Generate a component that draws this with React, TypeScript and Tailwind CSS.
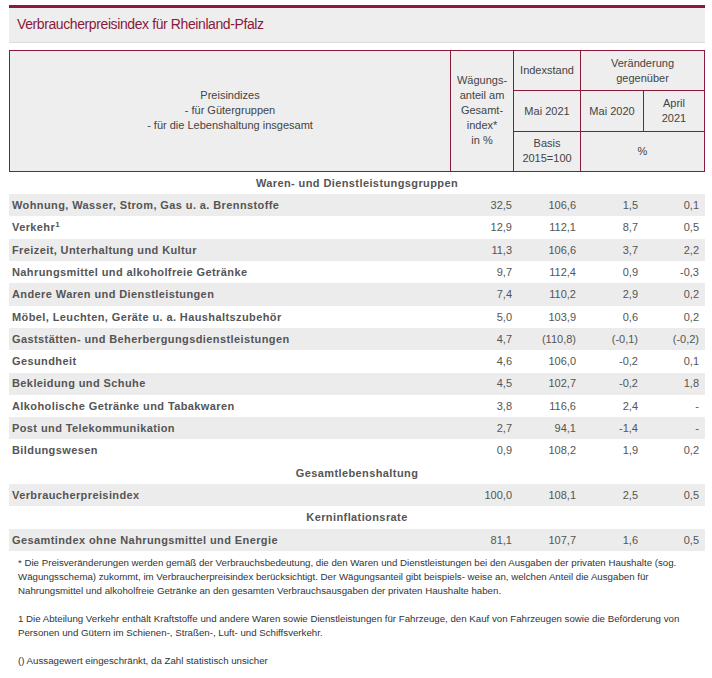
const rows: [string, string, string, string, string, boolean?][] = [
  ["Wohnung, Wasser, Strom, Gas u. a. Brennstoffe", "32,5", "106,6", "1,5", "0,1"],
  ["Verkehr", "12,9", "112,1", "8,7", "0,5", true],
  ["Freizeit, Unterhaltung und Kultur", "11,3", "106,6", "3,7", "2,2"],
  ["Nahrungsmittel und alkoholfreie Getränke", "9,7", "112,4", "0,9", "-0,3"],
  ["Andere Waren und Dienstleistungen", "7,4", "110,2", "2,9", "0,2"],
  ["Möbel, Leuchten, Geräte u. a. Haushaltszubehör", "5,0", "103,9", "0,6", "0,2"],
  ["Gaststätten- und Beherbergungsdienstleistungen", "4,7", "(110,8)", "(-0,1)", "(-0,2)"],
  ["Gesundheit", "4,6", "106,0", "-0,2", "0,1"],
  ["Bekleidung und Schuhe", "4,5", "102,7", "-0,2", "1,8"],
  ["Alkoholische Getränke und Tabakwaren", "3,8", "116,6", "2,4", "-"],
  ["Post und Telekommunikation", "2,7", "94,1", "-1,4", "-"],
  ["Bildungswesen", "0,9", "108,2", "1,9", "0,2"],
];

function DataRow({ r, gray }: { r: [string, string, string, string, string, boolean?]; gray: boolean }) {
  return (
    <div className={`flex h-[22.3px] items-center ${gray ? "bg-[#ececec]" : ""}`}>
      <div className="flex-1 pl-[3px] font-bold tracking-[0.4px] text-[#555]">
        {r[0]}
        {r[5] && <sup className="text-[8px]">1</sup>}
      </div>
      <div className="w-[60px] pr-[2px] text-right">{r[1]}</div>
      <div className="w-[67px] pr-[5px] text-right">{r[2]}</div>
      <div className="w-[63px] pr-[6px] text-right">{r[3]}</div>
      <div className="w-[61px] pr-[6px] text-right">{r[4]}</div>
    </div>
  );
}

function Section({ title }: { title: string }) {
  return (
    <div className="flex h-[22.3px] items-center justify-center font-bold tracking-[0.4px] text-[#555]">
      {title}
    </div>
  );
}

export default function App() {
  return (
    <main
      className="min-h-[678px] bg-white pt-[5px] text-[11px] text-[#555]"
      style={{ fontFamily: '"Liberation Sans", Arial, sans-serif' }}
    >
      <div className="mx-[9px] w-[696px]">

        <div className="border-t-[3px] border-b border-t-[#8a1a3a] border-b-[#dcdcdc] bg-[#eeeeee] px-[8px] pb-[9px] pt-[8px]">
          <h1 className="text-[14px] leading-[17px] tracking-[-0.4px] text-[#8a1a3a]">
            Verbraucherpreisindex für Rheinland-Pfalz
          </h1>
        </div>

        <table className="mt-[7px] w-[696px] border-collapse bg-[#eeeeee] text-center text-[#444]">
          <tbody>
            <tr className="h-[40.3px]">
              <td rowSpan={3} className="w-[441px] border border-[#8a1a3a] leading-[15px]">
                Preisindizes<br />- für Gütergruppen<br />- für die Lebenshaltung insgesamt
              </td>
              <td rowSpan={3} className="w-[63px] border border-[#8a1a3a] leading-[15px]">
                Wägungs-<br />anteil am<br />Gesamt-<br />index*<br />in %
              </td>
              <td className="w-[67px] border border-[#8a1a3a]">Indexstand</td>
              <td colSpan={2} className="border border-[#8a1a3a] leading-[15px]">
                Veränderung<br />gegenüber
              </td>
            </tr>
            <tr className="h-[40.3px]">
              <td className="border border-[#8a1a3a]">Mai 2021</td>
              <td className="w-[63px] border border-[#8a1a3a]">Mai 2020</td>
              <td className="w-[61px] border border-[#8a1a3a] leading-[15px]">April<br />2021</td>
            </tr>
            <tr className="h-[40.3px]">
              <td className="border border-[#8a1a3a] leading-[15px]">Basis<br />2015=100</td>
              <td colSpan={2} className="border border-[#8a1a3a]">%</td>
            </tr>
          </tbody>
        </table>

        <div>
          <Section title="Waren- und Dienstleistungsgruppen" />
          {rows.map((r, i) => (
            <DataRow key={r[0]} r={r} gray={i % 2 === 0} />
          ))}
          <Section title="Gesamtlebenshaltung" />
          <DataRow r={["Verbraucherpreisindex", "100,0", "108,1", "2,5", "0,5"]} gray />
          <Section title="Kerninflationsrate" />
          <DataRow r={["Gesamtindex ohne Nahrungsmittel und Energie", "81,1", "107,7", "1,6", "0,5"]} gray />
        </div>

        <div className="mt-[5px] pl-[9px] pr-[4px] text-[9.7px] leading-[14px] text-[#333]">
          <p className="mb-[14px]">
            * Die Preisveränderungen werden gemäß der Verbrauchsbedeutung, die den Waren und Dienstleistungen bei den Ausgaben der privaten Haushalte (sog. Wägungsschema) zukommt, im Verbraucherpreisindex berücksichtigt. Der Wägungsanteil gibt beispiels- weise an, welchen Anteil die Ausgaben für Nahrungsmittel und alkoholfreie Getränke an den gesamten Verbrauchsausgaben der privaten Haushalte haben.
          </p>
          <p className="mb-[14px]">
            1 Die Abteilung Verkehr enthält Kraftstoffe und andere Waren sowie Dienstleistungen für Fahrzeuge, den Kauf von Fahrzeugen sowie die Beförderung von Personen und Gütern im Schienen-, Straßen-, Luft- und Schiffsverkehr.
          </p>
          <p>() Aussagewert eingeschränkt, da Zahl statistisch unsicher</p>
        </div>

      </div>
    </main>
  );
}
